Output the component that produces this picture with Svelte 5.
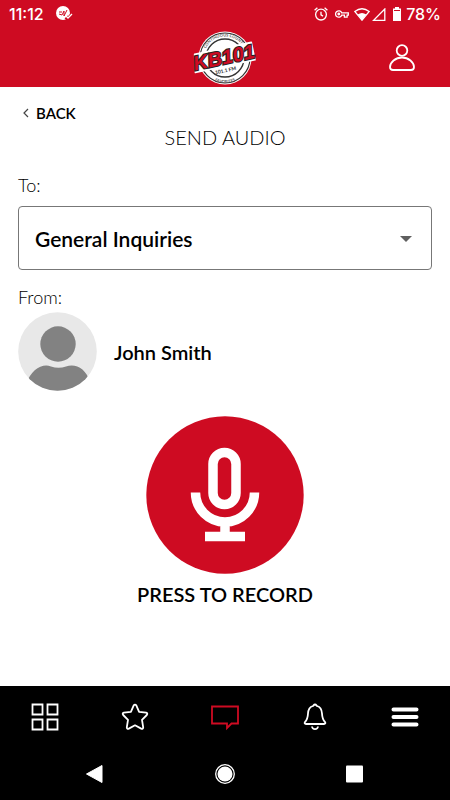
<!--
  SendAudio screen

  Lets a listener pick a recipient and record a voice message for the station.
-->
<script lang="ts">
  // ==========================================================================
  // STATE
  // ==========================================================================

  const recipients = ['General Inquiries', 'Song Requests', 'Contests'];

  const tabs = [
    { id: 'home', label: 'Home' },
    { id: 'favorites', label: 'Favorites' },
    { id: 'messages', label: 'Messages' },
    { id: 'alerts', label: 'Alerts' },
    { id: 'menu', label: 'Menu' },
  ];

  let recipient = $state('General Inquiries');
  let activeTab = $state('messages');
  let recording = $state(false);
</script>

<div class="screen">
  <header class="header">
    <div class="status-bar">
      <span>11:12</span>
      <svg class="status-call" width="18" height="16" viewBox="0 0 18 16" aria-hidden="true">
        <circle cx="7" cy="7" r="7" fill="#fff" />
        <path d="M3 6h3M3 8l3 1 2-4v5l3-6" fill="none" stroke="#ce0b22" stroke-width="1" />
        <path d="M10 11l2 2 4-4" fill="none" stroke="#ce0b22" stroke-width="4" />
        <path d="M10 10l2 2 4-4" fill="none" stroke="#fff" stroke-width="1.3" />
      </svg>

      <div class="status-right">
        <svg width="14" height="14" viewBox="0 0 14 14" fill="none" stroke="#fff" stroke-width="1.3" aria-hidden="true">
          <circle cx="7" cy="7.6" r="5.4" />
          <path d="M7 4.8v3l2 1.3M.6 3.2l2.800-2.500M13.400 3.200L10.600.7" />
        </svg>
        <svg class="key" width="14" height="8" viewBox="0 0 14 8" fill="none" stroke="#fff" stroke-width="1.3" aria-hidden="true">
          <path d="M6.7 2.8H13.300v2.400h-1.200v2H9.4v-2H6.700A3.200 3.200 0 1 1 6.700 2.800z" />
          <circle cx="3.8" cy="4" r=".8" fill="#fff" />
        </svg>
        <svg class="wifi" width="16" height="13" viewBox="0 0 16 13" aria-hidden="true">
          <path d="M.8 3.5Q8-2 15.200 3.500L8 12.200z" fill="none" stroke="#fff" stroke-width="1.3" />
          <path d="M3.7 6.600Q8 3.200 12.300 6.600L8 12z" fill="#fff" />
        </svg>
        <svg class="signal" width="14" height="13" viewBox="0 0 14 13" aria-hidden="true">
          <path d="M12.800 1v11.300H1.600z" fill="none" stroke="#fff" stroke-width="1.3" />
        </svg>
        <svg class="battery" width="10" height="14" viewBox="0 0 10 14" aria-hidden="true">
          <path d="M3 0h4v1.500h2V14H1V1.500h2z" fill="#fff" />
          <path d="M2 3.500h6" stroke="#ce0b22" stroke-width="1" />
        </svg>
        <span>78%</span>
      </div>
    </div>

    <div class="brand-bar">
      <svg class="logo" width="80" height="56" viewBox="0 0 80 56" role="img" aria-label="KB101">
        <defs>
          <path id="arc-top" d="M18.500 28a21.500 21.500 0 0 1 43 0" />
          <path id="arc-bottom" d="M16 29a24 24 0 0 0 48 0" />
        </defs>
        <circle cx="40" cy="28" r="26.500" fill="#fff" />
        <circle cx="40" cy="28" r="25" fill="none" stroke="#333" stroke-width="1.2" />
        <circle cx="40" cy="28" r="19" fill="#fff" stroke="#333" stroke-width="1.4" />
        <text class="logo-ring"><textPath href="#arc-top" startOffset="50%" text-anchor="middle">CONTINUOUS COUNTRY</textPath></text>
        <text class="logo-ring"><textPath href="#arc-bottom" startOffset="50%" text-anchor="middle">FAVORITES</textPath></text>
        <g transform="rotate(-12 40 28)">
          <path d="M11 18h58v18H8z" fill="#fff" stroke="#fff" stroke-width="1.500" stroke-linejoin="round" />
          <text class="logo-name" x="39" y="34" text-anchor="middle">KB101</text>
          <text class="logo-freq" x="38" y="42" text-anchor="middle">101.1 FM</text>
        </g>
      </svg>
      <button class="profile" aria-label="Profile">
        <svg width="28" height="28" viewBox="0 0 28 28" fill="none" stroke="#fff" stroke-width="1.8" aria-hidden="true">
          <circle cx="14" cy="6.5" r="5.3" />
          <path d="M14 13.5c6.500 0 12 5 12 9.500 0 2-1 3-3 3H5c-2 0-3-1-3-3 0-4.500 5.500-9.500 12-9.500z" />
        </svg>
      </button>
    </div>
  </header>

  <main class="content">
    <a class="back" href="#messages">
      <svg width="6" height="10" viewBox="0 0 6 10" fill="none" stroke="#444" stroke-width="1.2" aria-hidden="true">
        <path d="M5 1L1 5l4 4" />
      </svg>
      BACK
    </a>
    <h1 class="title">SEND AUDIO</h1>

    <label class="field-label" for="recipient">To:</label>
    <div class="select-wrap">
      <select id="recipient" bind:value={recipient}>
        {#each recipients as name (name)}
          <option value={name}>{name}</option>
        {/each}
      </select>
      <svg class="caret" width="12" height="6" viewBox="0 0 12 6" aria-hidden="true">
        <path d="M0 0h12L6 6z" fill="#5f5f5f" />
      </svg>
    </div>

    <p class="from-label">From:</p>
    <div class="sender">
      <svg width="80" height="80" viewBox="0 0 80 80" aria-hidden="true">
        <defs>
          <clipPath id="avatar-clip"><circle cx="39.500" cy="39.500" r="39.300" /></clipPath>
        </defs>
        <g clip-path="url(#avatar-clip)">
          <rect width="80" height="80" fill="#e8e8e8" />
          <circle cx="40" cy="32" r="17.700" fill="#828282" />
          <path d="M8 72C13 58 24 51 33 54.500c5 1.700 10 1.700 15 0C57 51 68 56 72 70v10H8z" fill="#828282" />
        </g>
      </svg>
      <span class="sender-name">John Smith</span>
    </div>

    <button class="record" aria-pressed={recording} onclick={() => (recording = !recording)}>
      <svg width="158" height="158" viewBox="0 0 158 158" aria-hidden="true">
        <circle cx="79" cy="79" r="78.700" fill="#ce0b22" />
        <g fill="none" stroke="#fff" stroke-width="9.500">
          <rect x="67" y="36.500" width="23" height="52" rx="11.500" />
          <path d="M49.500 76.500a29.500 29.500 0 0 0 59 0M79 106v14M59 120.500h40" />
        </g>
      </svg>
      <span>PRESS TO RECORD</span>
    </button>
  </main>

  <footer class="footer">
    <nav class="tabs">
      {#each tabs as tab (tab.id)}
        <button
          class="tab"
          class:active={activeTab === tab.id}
          aria-label={tab.label}
          onclick={() => (activeTab = tab.id)}
        >
          <svg width="28" height="28" viewBox="0 0 28 28" fill="none" stroke="currentColor" stroke-width="1.8" aria-hidden="true">
            {#if tab.id === 'home'}
              <path d="M1.500 1.500h10v10h-10zM16.500 1.500h10v10h-10zM1.500 16.500h10v10h-10zM16.500 16.500h10v10h-10z" />
            {:else if tab.id === 'favorites'}
              <path d="M12.600 2.600q1.400-2 2.800 0l2.700 6.200 7 .9q2 .6.700 2.300l-4.800 4.800 1.200 7.500q-.2 2-2 1.300L14 22.300l-6.200 3.300q-1.800.7-2-1.300L7 16.800 2.200 12q-1.300-1.700.700-2.300l7-.9z" stroke-linejoin="round" />
            {:else if tab.id === 'messages'}
              <path d="M1 3.500h26v17h-6.500l-4.500 4.500v-4.500H1z" />
            {:else if tab.id === 'alerts'}
              <path d="M14 1.500c1 0 1.500 1 2 1.500 3.500 1 4.800 3.500 5 7.500.2 4.500 1 6.500 3 8.500.8 1 .3 2-1 2H5c-1.300 0-1.800-1-1-2 2-2 2.800-4 3-8.500.2-4 1.500-6.500 5-7.500.5-.5 1-1.500 2-1.500z" />
              <path d="M11 23.500c.5 3.600 5.500 3.600 6 0" />
            {:else}
              <path d="M2.500 6.500h23M2.500 14h23M2.500 21.500h23" stroke-width="4" stroke-linecap="round" />
            {/if}
          </svg>
        </button>
      {/each}
    </nav>

    <div class="system-nav">
      <button aria-label="Go back">
        <svg width="20" height="20" viewBox="0 0 20 20" aria-hidden="true">
          <path d="M17 1.500v17L1.500 10z" fill="#fff" stroke="#fff" stroke-linejoin="round" />
        </svg>
      </button>
      <button aria-label="Go home">
        <svg width="20" height="20" viewBox="0 0 20 20" aria-hidden="true">
          <circle cx="10" cy="10" r="9.300" fill="none" stroke="#fff" stroke-width="1.300" />
          <circle cx="10" cy="10" r="7.500" fill="#fff" />
        </svg>
      </button>
      <button aria-label="Recent apps">
        <svg width="20" height="20" viewBox="0 0 20 20" aria-hidden="true">
          <rect x="1" y="1.500" width="17" height="17" rx="1" fill="#fff" />
        </svg>
      </button>
    </div>
  </footer>
</div>

<style>
  :global(body) {
    margin: 0;
    background-color: #fff;
  }

  .screen {
    display: flex;
    flex-direction: column;
    min-height: 100vh;
    color: #000;
    font-family: Lato, 'Open Sans', sans-serif;
  }

  svg {
    display: block;
    flex-shrink: 0;
  }

  button {
    padding: 0;
    border: 0;
    background: none;
    color: inherit;
    font: inherit;
    cursor: pointer;
  }

  /* Header */
  .header {
    background-color: #ce0b22;
    color: #fff;
  }

  .status-bar {
    display: flex;
    align-items: center;
    height: 28px;
    padding: 0 9px;
    font-family: Inter, Roboto, sans-serif;
    font-size: 16px;
    font-weight: 500;
  }

  .status-call {
    margin-left: 12px;
  }

  .status-right {
    display: flex;
    align-items: center;
    margin-left: auto;
  }

  .key {
    margin-left: 7px;
  }

  .wifi {
    margin-left: 5px;
  }

  .signal {
    margin-left: 2px;
  }

  .battery {
    margin: 0 4px 0 6px;
  }

  .brand-bar {
    display: grid;
    grid-template-columns: 1fr auto 1fr;
    align-items: center;
    height: 59px;
    padding: 0 34px;
  }

  .logo {
    grid-column: 2;
  }

  .logo-name {
    fill: #ce0b22;
    stroke: #222;
    stroke-width: 2px;
    paint-order: stroke;
    font-family: 'Liberation Sans Narrow', 'Liberation Sans', sans-serif;
    font-size: 20px;
    font-weight: 700;
    font-style: italic;
  }

  .logo-freq {
    fill: #333;
    font-size: 5px;
    font-weight: 700;
  }

  .logo-ring {
    fill: #555;
    font-size: 4px;
    font-weight: 700;
  }

  .profile {
    justify-self: end;
  }

  /* Content */
  .content {
    display: flex;
    flex: 1;
    flex-direction: column;
    padding: 16px 18px;
  }

  .back {
    display: flex;
    align-items: center;
    align-self: flex-start;
    gap: 7px;
    padding-left: 5px;
    color: #000;
    font-size: 15px;
    font-weight: 600;
    line-height: 20px;
    text-decoration: none;
  }

  .title {
    margin: 2px 0 24px;
    font-size: 20px;
    font-weight: 300;
    line-height: 24px;
    text-align: center;
  }

  .field-label,
  .from-label {
    margin: 0;
    font-size: 18px;
    font-weight: 300;
    line-height: 24px;
  }

  .field-label {
    margin-bottom: 9px;
  }

  .from-label {
    margin: 15px 0 3px;
  }

  .select-wrap {
    position: relative;
  }

  .select-wrap select {
    display: block;
    box-sizing: border-box;
    width: 100%;
    height: 64px;
    padding: 0 48px 0 16px;
    appearance: none;
    border: 1px solid #777;
    border-radius: 4px;
    background-color: #fff;
    color: #000;
    font-family: inherit;
    font-size: 21px;
    font-weight: 600;
  }

  .caret {
    position: absolute;
    top: 30px;
    right: 20px;
    pointer-events: none;
  }

  .sender {
    display: flex;
    align-items: center;
    gap: 16px;
  }

  .sender-name,
  .record {
    font-size: 20px;
    font-weight: 600;
    line-height: 24px;
  }

  .record {
    display: flex;
    flex-direction: column;
    align-items: center;
    align-self: center;
    gap: 8px;
    margin-top: 24px;
  }

  /* Footer */
  .footer {
    background-color: #000;
    color: #fff;
  }

  .tabs {
    display: grid;
    grid-template-columns: repeat(5, 1fr);
    height: 62px;
  }

  .tab {
    display: grid;
    place-items: center;
  }

  .tab.active {
    color: #ce0b22;
  }

  .system-nav {
    display: grid;
    grid-template-columns: repeat(3, 1fr);
    height: 52px;
    padding: 0 30px;
  }

  .system-nav button {
    display: grid;
    place-items: center;
  }
</style>
